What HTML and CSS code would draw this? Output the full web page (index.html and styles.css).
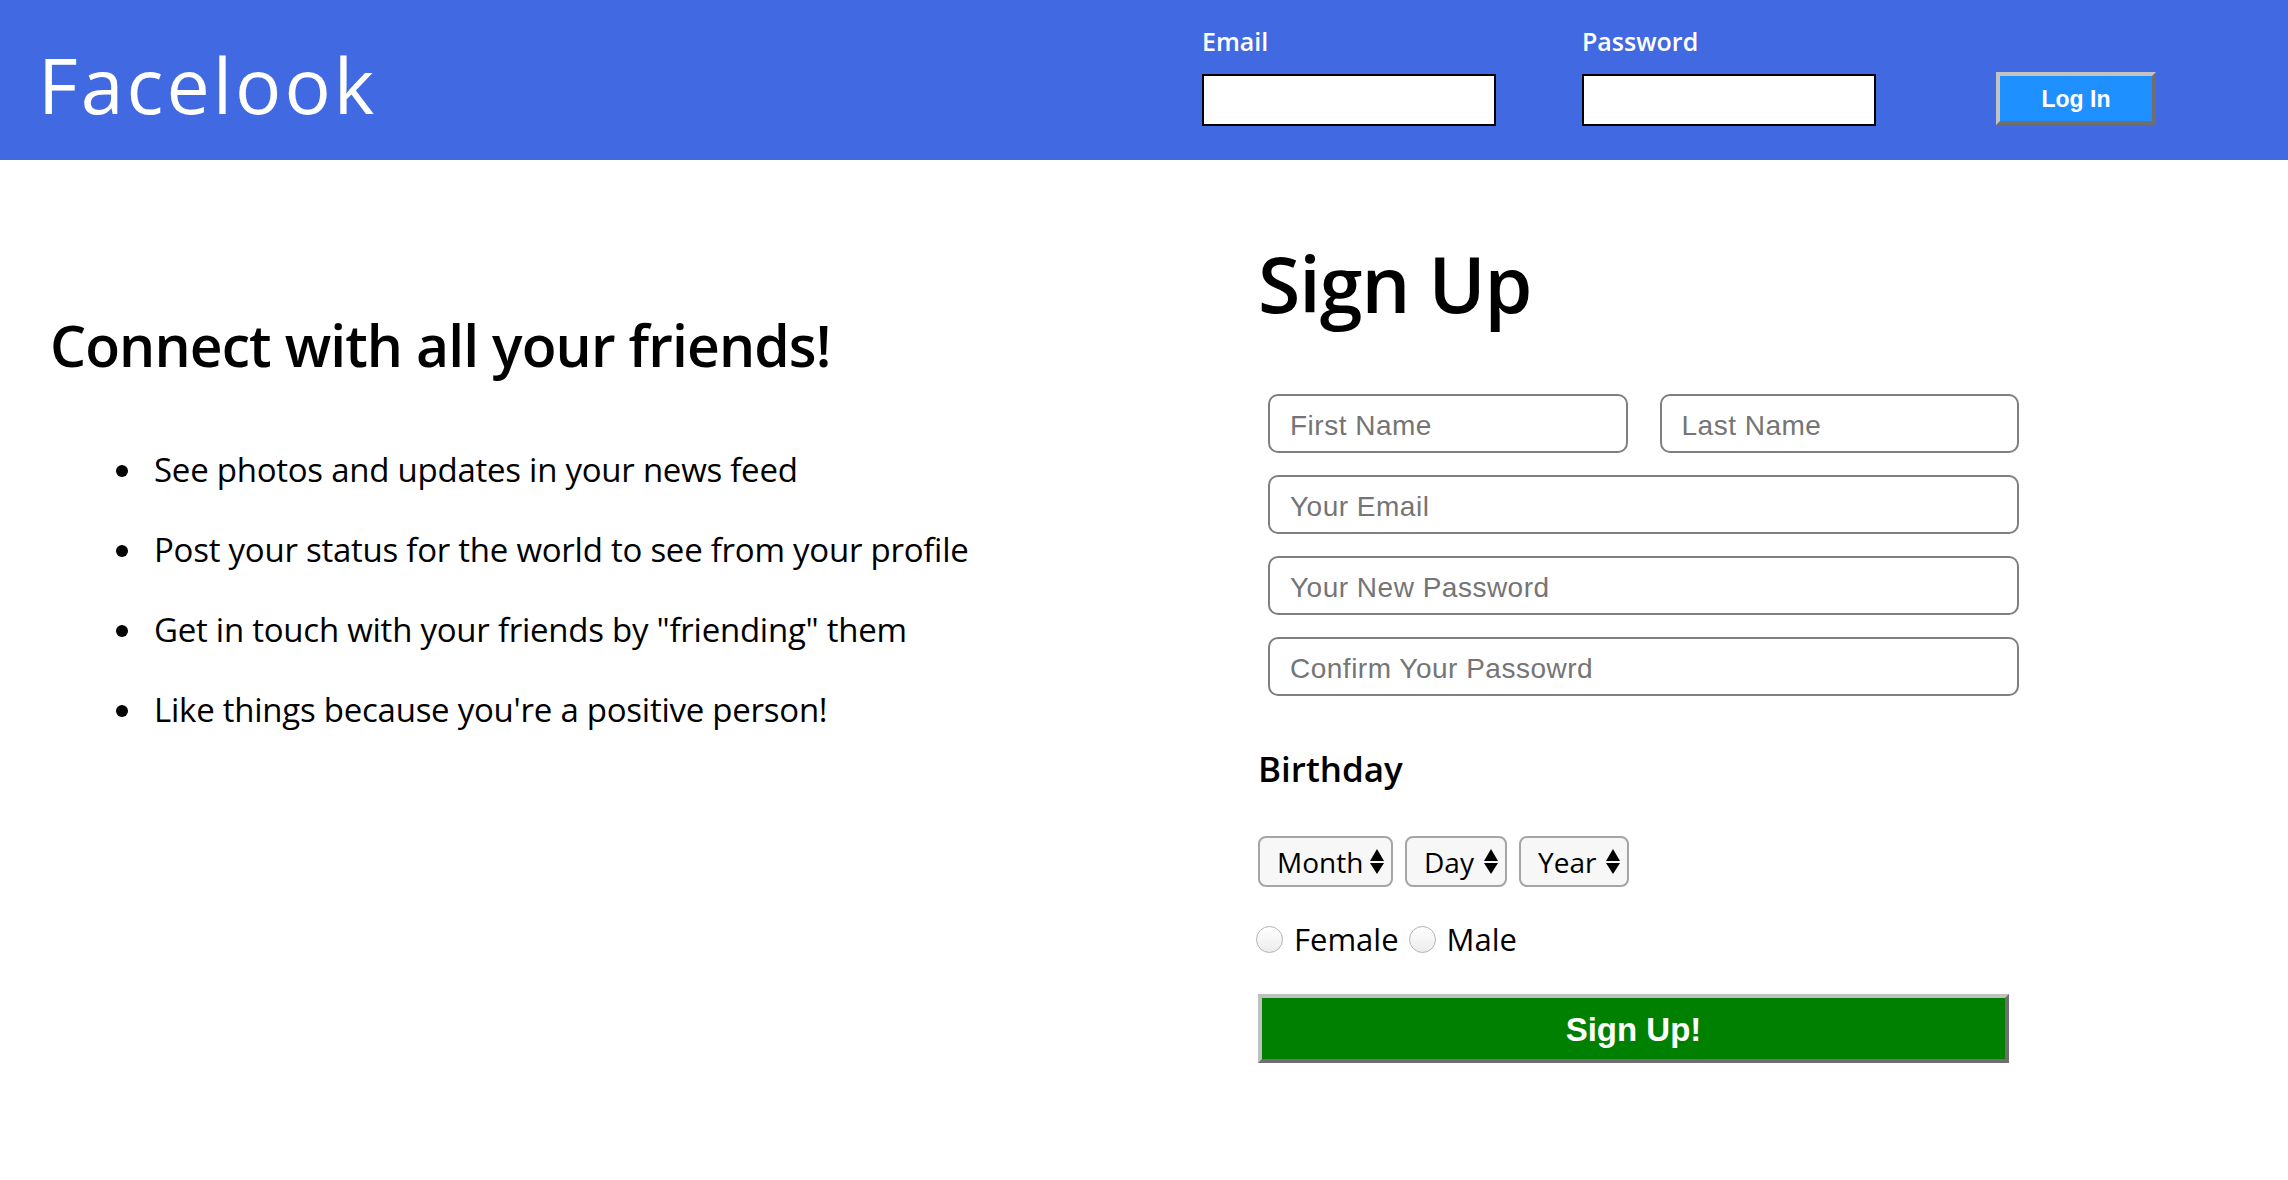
FILE: index.html
```html
<!DOCTYPE html>
<html lang="en">
<head>
<meta charset="utf-8">
<title>Facelook</title>
<link rel="stylesheet" href="styles.css">
</head>
<body>
<header class="topbar">
  <div class="logo">Facelook</div>
  <form class="login">
    <div class="field">
      <label class="field-label">Email</label>
      <input class="login-input" type="text">
    </div>
    <div class="field">
      <label class="field-label">Password</label>
      <input class="login-input" type="password">
    </div>
    <button class="login-btn" type="button">Log In</button>
  </form>
</header>
<main class="content">
  <section class="intro">
    <h2 class="intro-title">Connect with all your friends!</h2>
    <ul class="features">
      <li>See photos and updates in your news feed</li>
      <li>Post your status for the world to see from your profile</li>
      <li>Get in touch with your friends by "friending" them</li>
      <li>Like things because you're a positive person!</li>
    </ul>
  </section>
  <section class="signup">
    <h1 class="signup-title">Sign Up</h1>
    <div class="signup-fields">
      <div class="name-row">
        <input class="text-input" type="text" placeholder="First Name">
        <input class="text-input" type="text" placeholder="Last Name">
      </div>
      <input class="text-input" type="text" placeholder="Your Email">
      <input class="text-input" type="password" placeholder="Your New Password">
      <input class="text-input" type="password" placeholder="Confirm Your Passowrd">
    </div>
    <h3 class="birthday-title">Birthday</h3>
    <div class="birthday-row">
      <span class="select-wrap"><select class="select sel-month"><option>Month</option></select></span>
      <span class="select-wrap"><select class="select sel-day"><option>Day</option></select></span>
      <span class="select-wrap"><select class="select sel-year"><option>Year</option></select></span>
    </div>
    <div class="gender-row">
      <label class="gender"><input class="radio" type="radio" name="gender">Female</label>
      <label class="gender"><input class="radio" type="radio" name="gender">Male</label>
    </div>
    <button class="signup-btn" type="button">Sign Up!</button>
  </section>
</main>
</body>
</html>
```
FILE: styles.css
```css
html, body {
  margin: 0;
  padding: 0;
  background: #ffffff;
}

body {
  font-family: "Open Sans", "DejaVu Sans", sans-serif;
  color: #000000;
}

.topbar {
  box-sizing: border-box;
  height: 160px;
  background: #4169e1;
  display: flex;
  align-items: flex-start;
  padding: 0 132px 0 38px;
}

.logo {
  color: #ffffff;
  font-size: 77px;
  line-height: 77px;
  letter-spacing: 3px;
  margin-top: 46px;
}

.login {
  margin-left: auto;
  margin-top: 29px;
  display: flex;
  align-items: flex-end;
}

.field {
  display: flex;
  flex-direction: column;
  margin-right: 86px;
}

.field:last-of-type {
  margin-right: 120px;
}

.field-label {
  color: #ffffff;
  font-weight: 600;
  font-size: 25px;
  line-height: 25px;
  margin-bottom: 20px;
}

.login-input {
  box-sizing: border-box;
  width: 294px;
  height: 52px;
  border: 2px solid #000000;
  background: #ffffff;
  padding: 0 8px;
  font-size: 20px;
  outline: none;
}

.login-btn {
  box-sizing: border-box;
  width: 160px;
  height: 53px;
  margin-bottom: 1px;
  background: #1e90ff;
  color: #ffffff;
  font-family: "Liberation Sans", Arial, sans-serif;
  font-weight: 700;
  font-size: 23px;
  border-style: solid;
  border-width: 4px;
  border-color: #c3c3c3 #6e6e6e #6e6e6e #c3c3c3;
  padding: 2px 0 0 0;
}

.content {
  display: flex;
  align-items: flex-start;
  padding-left: 50px;
}

.intro {
  width: 1208px;
  padding-top: 157px;
}

.intro-title {
  margin: 0;
  font-size: 57px;
  line-height: 57px;
  font-weight: 600;
  letter-spacing: -0.9px;
}

.features {
  margin: 56px 0 0 0;
  padding-left: 96px;
  list-style: disc outside;
}

.features li {
  padding-left: 8px;
  font-size: 33px;
  line-height: 80px;
  letter-spacing: -0.25px;
}

.signup {
  width: 761px;
  padding-top: 85px;
}

.signup-title {
  margin: 0;
  font-size: 77px;
  line-height: 77px;
  font-weight: 600;
  letter-spacing: -1px;
}

.signup-fields {
  margin: 72px 0 0 10px;
  width: 751px;
  display: flex;
  flex-direction: column;
  gap: 22px;
}

.name-row {
  display: grid;
  grid-template-columns: 1fr 1fr;
  gap: 32px;
}

.text-input {
  box-sizing: border-box;
  width: 100%;
  height: 59px;
  border: 2px solid #7f7f7f;
  border-radius: 10px;
  padding: 5px 20px 0 20px;
  font-family: "Liberation Sans", Arial, sans-serif;
  font-size: 28px;
  letter-spacing: 0.5px;
  color: #000000;
  background: #ffffff;
  outline: none;
}

.text-input::placeholder {
  color: #757575;
}

.birthday-title {
  margin: 55px 0 0 0;
  font-size: 35px;
  line-height: 35px;
  font-weight: 600;
}

.birthday-row {
  margin-top: 50px;
  display: flex;
  gap: 12px;
}

.select-wrap {
  position: relative;
  display: inline-block;
}

.select-wrap::before,
.select-wrap::after {
  content: "";
  position: absolute;
  right: 9px;
  width: 0;
  height: 0;
  border-left: 7px solid transparent;
  border-right: 7px solid transparent;
  pointer-events: none;
}

.select-wrap::before {
  top: 13px;
  border-bottom: 12px solid #000000;
}

.select-wrap::after {
  top: 27px;
  border-top: 11px solid #000000;
}

.select {
  -webkit-appearance: none;
  appearance: none;
  box-sizing: border-box;
  height: 51px;
  border: 2px solid #a5a5a5;
  border-radius: 8px;
  background: #f7f7f7;
  font-family: "Open Sans", "DejaVu Sans", sans-serif;
  font-size: 28px;
  color: #000000;
  padding: 0 0 0 17px;
  outline: none;
}

.sel-month { width: 135px; }
.sel-day { width: 102px; }
.sel-year { width: 110px; }

.gender-row {
  margin-top: 39px;
  display: flex;
  align-items: center;
  gap: 10px;
}

.gender {
  display: flex;
  align-items: center;
  gap: 11px;
  font-size: 31px;
  line-height: 27px;
}

.radio {
  -webkit-appearance: none;
  appearance: none;
  box-sizing: border-box;
  width: 27px;
  height: 27px;
  margin: 0 0 0 -2px;
  border: 1px solid #b3b3b3;
  border-radius: 50%;
  background: linear-gradient(#ffffff, #ececec);
}

.gender + .gender .radio {
  margin-left: 0;
}

.signup-btn {
  box-sizing: border-box;
  display: block;
  margin-top: 41px;
  width: 751px;
  height: 69px;
  background: #008000;
  color: #ffffff;
  font-family: "Liberation Sans", Arial, sans-serif;
  font-weight: 700;
  font-size: 33px;
  border-style: solid;
  border-width: 4px;
  border-color: #c0c0c0 #6e6e6e #6e6e6e #c0c0c0;
  padding: 2px 0 0 0;
}
```
